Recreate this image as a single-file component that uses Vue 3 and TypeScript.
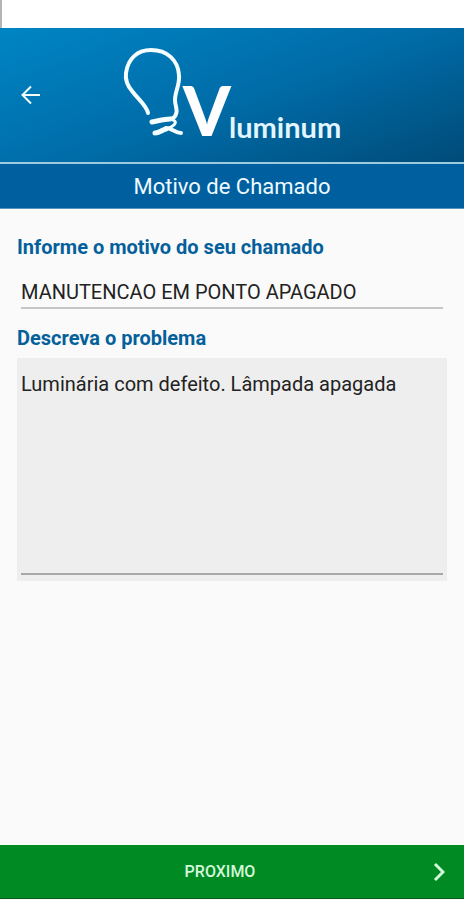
<script setup lang="ts">
import { ref } from 'vue'

const motivo = ref('MANUTENCAO EM PONTO APAGADO')
const descricao = ref('Luminária com defeito. Lâmpada apagada')
</script>

<template>
  <div class="screen">
    <div class="status-strip"></div>
    <header class="brand-bar">
      <button class="back" type="button" aria-label="Voltar">
        <svg width="22" height="22" viewBox="0 0 22 22" fill="none" stroke="currentColor" stroke-width="2">
          <path d="M20 11H3M11 2.500L2.500 11L11 19.500" />
        </svg>
      </button>
      <svg class="logo" width="224" height="100" viewBox="0 0 224 100" role="img" aria-label="V luminum">
        <g fill="none" stroke="currentColor" stroke-linecap="round" stroke-linejoin="round">
          <path
            stroke-width="4"
            d="M28 68C27 61 18 54 12 46C7 40 5 35 6 28C8 13 18 5 31 5C47 5 58 15 59 30C60 40 55 46 55 55C55 61 58 64 56 69C55 73 52 74 49 74"
          />
          <path stroke-width="5" d="M32 77C38 76 44 74 50 74" />
          <path stroke-width="3" d="M50 74C58 76 56 79 51 82C47 84 42 84 38 87" />
          <path stroke-width="5" d="M35 88C39 88 42 85 46 84" />
          <path stroke-width="4" d="M46 83C52 83 55 88 61 88" />
        </g>
        <text class="logo-mark" x="63" y="91">V</text>
        <text class="logo-name" x="109" y="93">luminum</text>
      </svg>
    </header>
    <h1 class="title">Motivo de Chamado</h1>
    <main class="form">
      <label class="label" for="motivo">Informe o motivo do seu chamado</label>
      <input id="motivo" v-model="motivo" class="reason" type="text" />
      <label class="label" for="descricao">Descreva o problema</label>
      <div class="box">
        <textarea id="descricao" v-model="descricao" class="description"></textarea>
      </div>
    </main>
    <button class="next" type="button">
      <span class="next-text">PROXIMO</span>
      <svg width="12" height="20" viewBox="0 0 12 20" fill="none" stroke="currentColor" stroke-width="3">
        <path d="M2 2L10 10L2 18" />
      </svg>
    </button>
  </div>
</template>

<style>
body {
  margin: 0;
  background: #fafafa;
}
</style>

<style scoped>
.screen {
  display: flex;
  flex-direction: column;
  box-sizing: border-box;
  min-height: 100vh;
  padding-bottom: 1px;
  background: #fafafa;
  font-family: Roboto, 'Liberation Sans', sans-serif;
}
.status-strip {
  height: 28px;
  box-sizing: border-box;
  border-left: 2px solid #b4b4b4;
  background: #fff;
}
.brand-bar {
  display: grid;
  grid-template-columns: 1fr auto 1fr;
  align-items: center;
  height: 134px;
  color: #f4fdff;
  background: linear-gradient(160deg, #0085c4 0%, #006ca8 52%, #004b78 100%);
}
.back {
  justify-self: start;
  display: flex;
  margin-left: 20px;
  padding: 0;
  border: 0;
  background: none;
  color: inherit;
}
.logo {
  display: block;
  overflow: visible;
}
.logo-mark {
  font: 900 68px Lato, sans-serif;
  fill: #fff;
}
.logo-name {
  font: 700 29px Lato, sans-serif;
  fill: #e2f6ff;
}
.title {
  margin: 0;
  padding-top: 2px;
  border-top: 2px solid #9ccbe0;
  border-bottom: 1px solid #5593bb;
  background: #00609f;
  color: #eefaff;
  font-size: 22px;
  font-weight: 400;
  line-height: 42px;
  text-align: center;
}
.form {
  flex: 1;
  display: flex;
  flex-direction: column;
  padding: 24px 17px;
}
.label {
  color: #04609b;
  font-size: 20px;
  font-weight: 700;
  line-height: 28px;
}
.reason,
.description {
  box-sizing: border-box;
  border: 0;
  border-radius: 0;
  background: transparent;
  color: #222;
  font-family: inherit;
  font-size: 20px;
  outline: none;
}
.reason {
  height: 32px;
  margin: 16px 4px 15px;
  padding: 0;
  border-bottom: 2px solid #c6c6c6;
}
.box {
  margin-top: 6px;
  padding: 12px 4px 6px;
  background: #eee;
}
.description {
  display: block;
  width: 100%;
  height: 205px;
  padding: 0;
  border-bottom: 2px solid #a8a8a8;
  line-height: 28px;
  resize: none;
}
.next {
  display: grid;
  grid-template-columns: 1fr auto;
  align-items: center;
  height: 54px;
  padding: 0 19px 0 7px;
  border: 0;
  border-bottom: 1px solid #06591a;
  background: #008a24;
  color: #d4f8d8;
  font-family: inherit;
  font-size: 16px;
  font-weight: 500;
}
.next-text {
  text-align: center;
}
</style>
